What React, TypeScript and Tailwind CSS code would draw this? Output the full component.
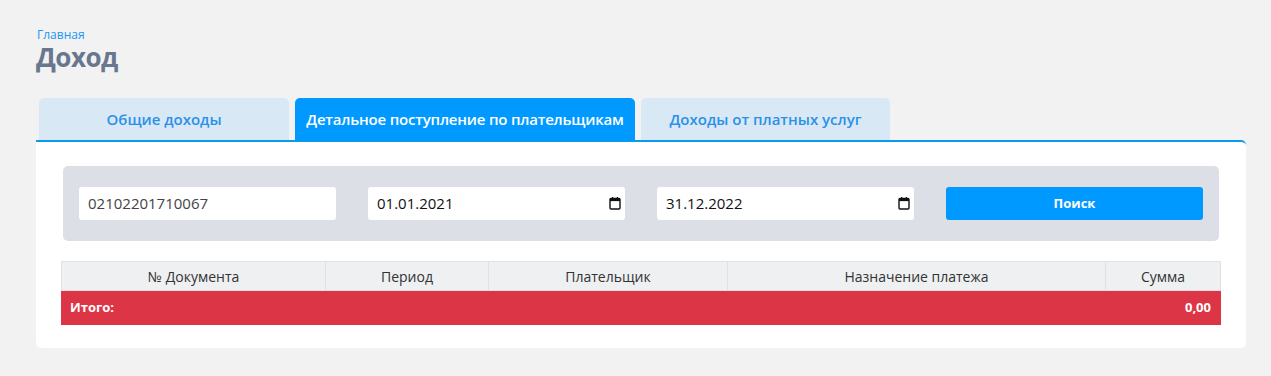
import React from "react";

const Cal = () => (
  <svg width="12" height="13" viewBox="0 0 12 13" className="shrink-0">
    <rect x="1" y="1.5" width="10" height="10.5" rx="1" fill="none" stroke="#111" strokeWidth="1.4" />
    <rect x="1" y="1.5" width="10" height="2.6" fill="#111" />
    <rect x="3" y="0" width="1.2" height="2" fill="#111" />
    <rect x="7.8" y="0" width="1.2" height="2" fill="#111" />
  </svg>
);

export default function App() {
  const font = { fontFamily: '"Open Sans", "Noto Sans", sans-serif' };
  return (
    <div className="min-h-[376px] w-full bg-[#f2f2f2] pt-[27px] px-[36px]" style={font}>
      <div className="text-[12px] leading-[16px] text-[#2196f3] pl-[1px]">Главная</div>
      <div className="text-[26px] leading-[28px] font-bold text-[#68778d] tracking-[-0.5px]">Доход</div>
      <div className="mt-[27px] flex gap-[6px] pl-[3px]">
        <div className="w-[250px] h-[42px] rounded-t-[5px] bg-[#d9e8f5] flex items-center justify-center text-[15px] font-semibold text-[#2a91e8]">Общие доходы</div>
        <div className="w-[340px] h-[42px] rounded-t-[5px] bg-[#0099ff] flex items-center justify-center text-[15px] font-semibold text-white tracking-[-0.2px]">Детальное поступление по плательщикам</div>
        <div className="w-[249px] h-[42px] rounded-t-[5px] bg-[#d9e8f5] flex items-center justify-center text-[15px] font-semibold text-[#2a91e8]">Доходы от платных услуг</div>
      </div>
      <div className="w-[1210px] bg-white rounded-b-[5px] rounded-tr-[5px] border-t-2 border-[#0a98f0] pt-[24px] pb-[23px] px-[25px]">
        <div className="bg-[#dce0e6] rounded-[5px] pt-[21px] pb-[21px] pl-[16px] pr-[16px] grid grid-cols-4 gap-x-[32px] mx-[2px]">
          <div className="h-[33px] bg-white rounded-[3px] flex items-center px-[9px] text-[15px] text-[#444]">02102201710067</div>
          <div className="h-[33px] bg-white rounded-[3px] flex items-center justify-between pl-[9px] pr-[4px] text-[15px] text-[#111]">
            <span>01.01.2021</span>
            <Cal />
          </div>
          <div className="h-[33px] bg-white rounded-[3px] flex items-center justify-between pl-[9px] pr-[4px] text-[15px] text-[#111]">
            <span>31.12.2022</span>
            <Cal />
          </div>
          <div className="h-[33px] bg-[#0099ff] rounded-[3px] flex items-center justify-center text-[13px] font-bold text-white">Поиск</div>
        </div>
        <div className="mt-[20px] text-[14px]">
          <div className="flex h-[30px] bg-[#eef0f2] border border-[#dee2e6] text-[#333]">
            <div className="w-[264px] flex items-center justify-center border-r border-[#dee2e6]">№ Документа</div>
            <div className="w-[163px] flex items-center justify-center border-r border-[#dee2e6]">Период</div>
            <div className="w-[239px] flex items-center justify-center border-r border-[#dee2e6]">Плательщик</div>
            <div className="w-[378px] flex items-center justify-center border-r border-[#dee2e6]">Назначение платежа</div>
            <div className="flex-1 flex items-center justify-center">Сумма</div>
          </div>
          <div className="h-[34px] bg-[#dc3545] flex items-center justify-between pl-[9px] pr-[10px] text-white font-bold text-[13px]">
            <span>Итого:</span>
            <span>0,00</span>
          </div>
        </div>
      </div>
    </div>
  );
}
